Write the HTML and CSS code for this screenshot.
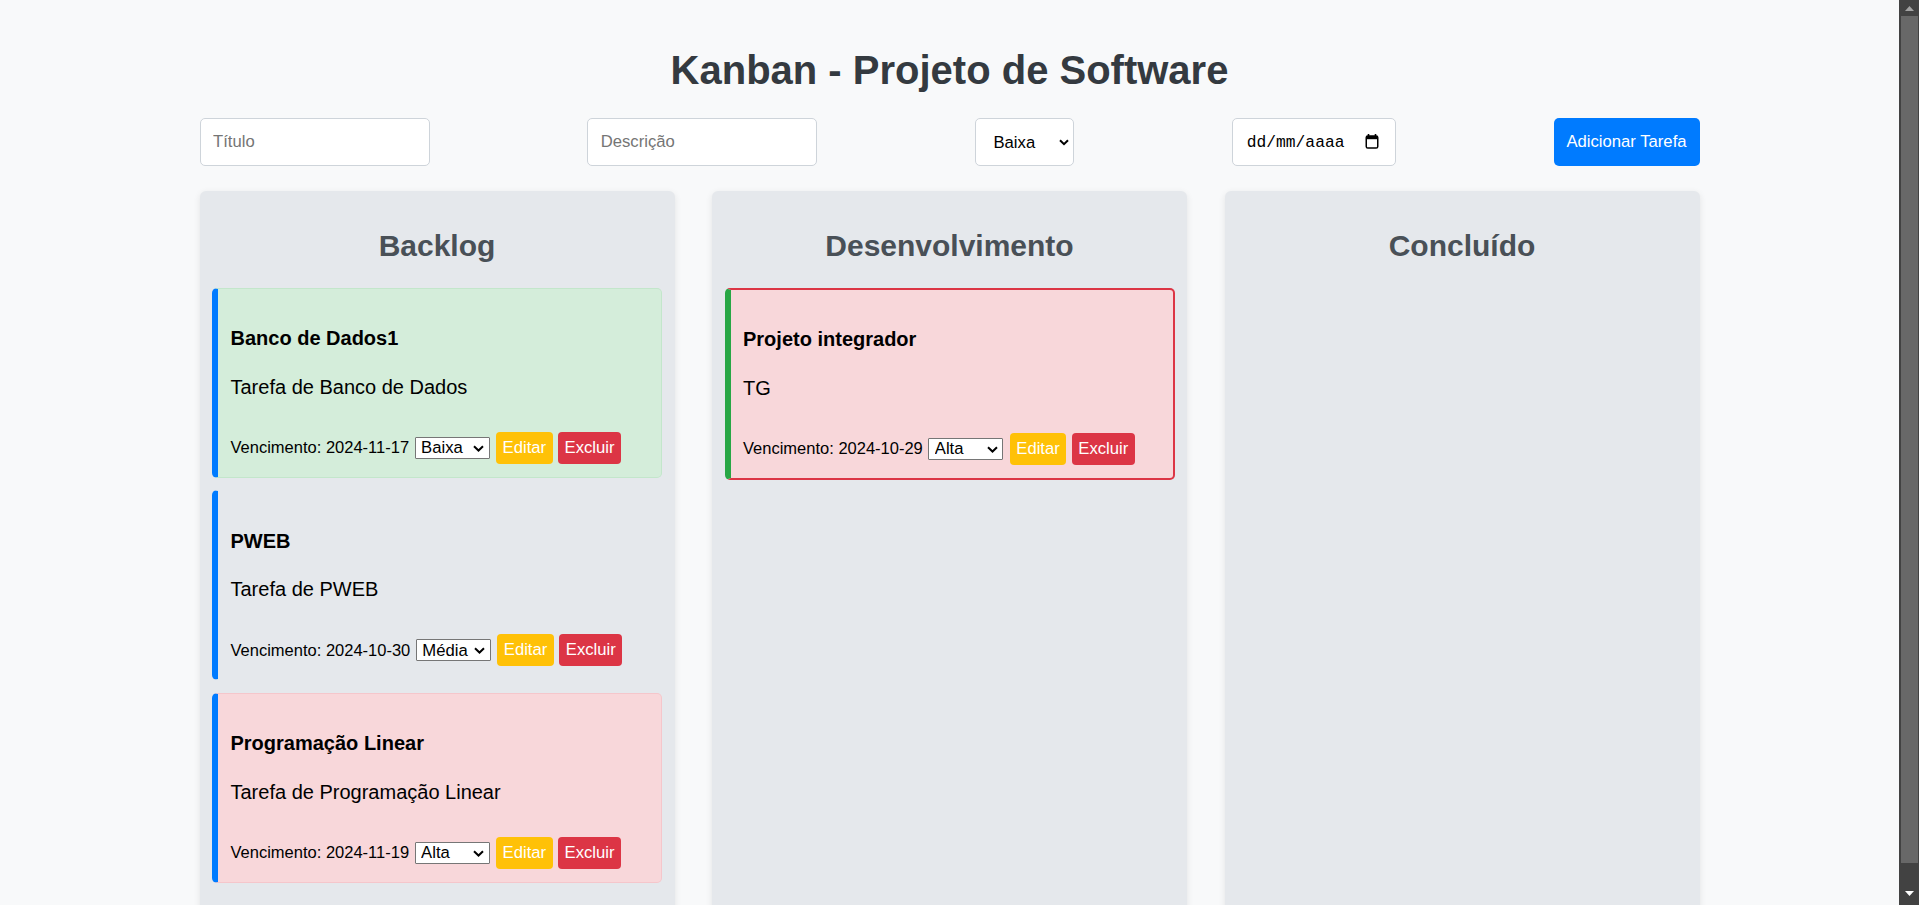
FILE: index.html
```html
<!DOCTYPE html>
<html lang="pt-BR">
<head>
<meta charset="utf-8">
<title>Kanban - Projeto de Software</title>
<link rel="stylesheet" href="styles.css">
</head>
<body>
<div class="page">
  <div class="container">
    <h1 class="title">Kanban - Projeto de Software</h1>

    <form class="task-form">
      <input class="field field-text" type="text" placeholder="Título">
      <input class="field field-text" type="text" placeholder="Descrição">
      <span class="select-wrap field-select">
        <select class="field field-priority">
          <option>Baixa</option>
          <option>Média</option>
          <option>Alta</option>
        </select>
        <svg class="chevron chevron-lg" width="10" height="7" viewBox="0 0 10 7"><path d="M1 1.2 5 5.2 9 1.2" fill="none" stroke="#000" stroke-width="2"/></svg>
      </span>
      <div class="field field-date">
        <span class="date-mask">dd/mm/aaaa</span>
        <svg class="calendar" width="14" height="15" viewBox="0 0 14 15"><path d="M3.5 0v2.5M10.5 0v2.5" stroke="#000" stroke-width="1.6"/><rect x="1.25" y="2" width="11.5" height="12" rx="1.6" fill="none" stroke="#000" stroke-width="1.5"/><rect x="1.25" y="2" width="11.5" height="3.2" fill="#000"/></svg>
      </div>
      <button type="button" class="btn-add">Adicionar Tarefa</button>
    </form>

    <div class="board">
      <section class="column">
        <h2 class="column-title">Backlog</h2>

        <div class="card card-low">
          <h3 class="card-title">Banco de Dados1</h3>
          <p class="card-desc">Tarefa de Banco de Dados</p>
          <div class="card-footer">
            <span class="due">Vencimento: 2024-11-17</span>
            <span class="select-wrap mini-wrap">
              <select class="mini-select"><option selected>Baixa</option><option>Média</option><option>Alta</option></select>
              <svg class="chevron chevron-sm" width="11" height="7" viewBox="0 0 11 7"><path d="M1 1.2 5.5 5.5 10 1.2" fill="none" stroke="#000" stroke-width="2"/></svg>
            </span>
            <button type="button" class="btn btn-edit">Editar</button>
            <button type="button" class="btn btn-delete">Excluir</button>
          </div>
        </div>

        <div class="card card-medium">
          <h3 class="card-title">PWEB</h3>
          <p class="card-desc">Tarefa de PWEB</p>
          <div class="card-footer">
            <span class="due">Vencimento: 2024-10-30</span>
            <span class="select-wrap mini-wrap">
              <select class="mini-select"><option>Baixa</option><option selected>Média</option><option>Alta</option></select>
              <svg class="chevron chevron-sm" width="11" height="7" viewBox="0 0 11 7"><path d="M1 1.2 5.5 5.5 10 1.2" fill="none" stroke="#000" stroke-width="2"/></svg>
            </span>
            <button type="button" class="btn btn-edit">Editar</button>
            <button type="button" class="btn btn-delete">Excluir</button>
          </div>
        </div>

        <div class="card card-high">
          <h3 class="card-title">Programação Linear</h3>
          <p class="card-desc">Tarefa de Programação Linear</p>
          <div class="card-footer">
            <span class="due">Vencimento: 2024-11-19</span>
            <span class="select-wrap mini-wrap">
              <select class="mini-select"><option>Baixa</option><option>Média</option><option selected>Alta</option></select>
              <svg class="chevron chevron-sm" width="11" height="7" viewBox="0 0 11 7"><path d="M1 1.2 5.5 5.5 10 1.2" fill="none" stroke="#000" stroke-width="2"/></svg>
            </span>
            <button type="button" class="btn btn-edit">Editar</button>
            <button type="button" class="btn btn-delete">Excluir</button>
          </div>
        </div>
      </section>

      <section class="column">
        <h2 class="column-title">Desenvolvimento</h2>

        <div class="card card-high card-dev card-overdue">
          <h3 class="card-title">Projeto integrador</h3>
          <p class="card-desc">TG</p>
          <div class="card-footer">
            <span class="due">Vencimento: 2024-10-29</span>
            <span class="select-wrap mini-wrap">
              <select class="mini-select"><option>Baixa</option><option>Média</option><option selected>Alta</option></select>
              <svg class="chevron chevron-sm" width="11" height="7" viewBox="0 0 11 7"><path d="M1 1.2 5.5 5.5 10 1.2" fill="none" stroke="#000" stroke-width="2"/></svg>
            </span>
            <button type="button" class="btn btn-edit">Editar</button>
            <button type="button" class="btn btn-delete">Excluir</button>
          </div>
        </div>
      </section>

      <section class="column">
        <h2 class="column-title">Concluído</h2>
      </section>
    </div>
  </div>
</div>

<div class="scrollbar" aria-hidden="true">
  <div class="sb-button">
    <svg width="9" height="5" viewBox="0 0 9 5"><path d="M0 5 4.5 0 9 5z" fill="#a3a3a3"/></svg>
  </div>
  <div class="sb-thumb"></div>
  <div class="sb-track"></div>
  <div class="sb-button sb-button-down">
    <svg width="9" height="5" viewBox="0 0 9 5"><path d="M0 0 4.5 5 9 0z" fill="#ffffff"/></svg>
  </div>
</div>
</body>
</html>
```

FILE: styles.css
```css
html, body {
  margin: 0;
  padding: 0;
  overflow: hidden;
  height: 100%;
}

body {
  background: #f8f9fa;
  font-family: "Liberation Sans", Arial, sans-serif;
  color: #000;
}

.page {
  padding: 47px 20px 20px 0;
}

.container {
  max-width: 1500px;
  margin: 0 auto;
}

.title {
  margin: 0 0 25px;
  font-size: 40px;
  line-height: 46px;
  font-weight: bold;
  text-align: center;
  color: #343a40;
}

/* ---------- form ---------- */
.task-form {
  display: flex;
  justify-content: space-between;
  align-items: center;
  height: 48px;
  margin: 0 0 25px;
}

.field {
  box-sizing: border-box;
  height: 48px;
  border: 1px solid #ced4da;
  border-radius: 5px;
  background: #fff;
  font-family: "Liberation Sans", Arial, sans-serif;
  font-size: 16.67px;
  color: #000;
  margin: 0;
  outline: none;
}

.field-text {
  width: 230px;
  padding: 0 12.5px;
}

.field-text::placeholder {
  color: #757575;
}

.select-wrap {
  position: relative;
  display: inline-block;
}

.chevron {
  position: absolute;
  top: 50%;
  pointer-events: none;
}

.field-priority {
  -webkit-appearance: none;
  appearance: none;
  width: 99px;
  padding: 0 0 0 17.5px;
  display: block;
}

.chevron-lg {
  right: 5.5px;
  margin-top: -3px;
}

.field-date {
  width: 164px;
  display: flex;
  align-items: center;
  justify-content: space-between;
  padding: 0 16px 0 14px;
}

.date-mask {
  font-family: "Liberation Mono", "DejaVu Sans Mono", monospace;
  font-size: 16.3px;
  color: #000;
}

.calendar {
  display: block;
  margin-top: -1px;
}

.btn-add {
  box-sizing: border-box;
  width: 146px;
  height: 48px;
  border: none;
  border-radius: 5px;
  background: #007bff;
  color: #fff;
  font-family: "Liberation Sans", Arial, sans-serif;
  font-size: 16.67px;
  padding: 0;
  margin: 0;
}

/* ---------- board ---------- */
.board {
  display: grid;
  grid-template-columns: repeat(3, 1fr);
  column-gap: 37.5px;
  align-items: stretch;
}

.column {
  background: #e5e8ec;
  border-radius: 6px;
  padding: 12.5px 12.5px 0.5px;
  box-shadow: 0 2px 7px rgba(0, 0, 0, 0.09);
  min-height: 720px;
}

.column-title {
  margin: 25px 0 24.5px;
  font-size: 30px;
  line-height: 34.5px;
  font-weight: bold;
  text-align: center;
  color: #495057;
}

/* ---------- card ---------- */
.card {
  box-sizing: border-box;
  height: 190px;
  border: 1px solid transparent;
  border-left: 6px solid #007bff;
  border-radius: 5px;
  padding: 12.5px;
  margin-bottom: 12.5px;
}

.card-low {
  background: #d4edda;
  border-color: #c3e6cb;
  border-left-color: #007bff;
}

.card-medium {
  background: transparent;
}

.card-high {
  background: #f8d7da;
  border-color: #f5c6cb;
  border-left-color: #007bff;
}

.card-dev {
  border-left-color: #28a745;
}

.card-overdue {
  height: 192px;
  border-width: 2px 2px 2px 6px;
  border-color: #dc3545 #dc3545 #dc3545 #28a745;
}

.card-title {
  margin: 26.2px 0 0;
  font-size: 20px;
  line-height: 23px;
  font-weight: bold;
}

.card-desc {
  margin: 25.8px 0 0;
  font-size: 20px;
  line-height: 23px;
}

.card-footer {
  display: flex;
  align-items: center;
  height: 32px;
  margin-top: 33px;
}

.due {
  font-size: 16.5px;
  line-height: 19px;
  white-space: nowrap;
}

.mini-wrap {
  margin-left: 5.5px;
}

.mini-select {
  -webkit-appearance: none;
  appearance: none;
  display: block;
  box-sizing: border-box;
  width: 75px;
  height: 22px;
  margin: 0;
  padding: 0 0 0 5.5px;
  border: 1px solid #767676;
  border-radius: 1px;
  background: #fff;
  font-family: "Liberation Sans", Arial, sans-serif;
  font-size: 16.67px;
  color: #000;
  outline: none;
}

.chevron-sm {
  right: 5.5px;
  margin-top: -3px;
}

.btn {
  box-sizing: border-box;
  height: 32px;
  padding: 0 6.5px;
  border: none;
  border-radius: 4px;
  color: #fff;
  font-family: "Liberation Sans", Arial, sans-serif;
  font-size: 16.67px;
}

.btn-edit {
  background: #ffc107;
  margin-left: 6.5px;
}

.btn-delete {
  background: #dc3545;
  margin-left: 5.5px;
}

/* ---------- decorative scrollbar of the screenshot ---------- */
.scrollbar {
  position: fixed;
  top: 0;
  right: 0;
  bottom: 0;
  width: 20px;
  background: #424242;
  display: flex;
  flex-direction: column;
}

.sb-button {
  height: 16px;
  display: flex;
  align-items: center;
  justify-content: center;
  flex: none;
}

.sb-button-down {
  height: 18px;
  align-items: flex-start;
  padding-top: 4px;
  box-sizing: border-box;
}

.sb-thumb {
  height: 847px;
  margin: 0 1px 0 2px;
  background: #686868;
  flex: none;
}

.sb-track {
  flex: 1;
}
```
